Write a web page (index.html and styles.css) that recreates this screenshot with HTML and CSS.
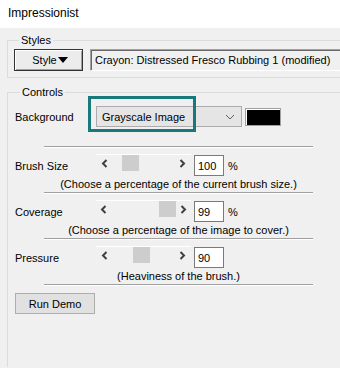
FILE: index.html
```html
<!DOCTYPE html>
<html lang="en">
<head>
    <meta charset="UTF-8">
    <meta name="viewport" content="width=device-width, initial-scale=1.0">
    <title>Impressionist</title>
    <link rel="stylesheet" href="styles.css">
</head>
<body>

    <div class="titlebar">Impressionist</div>

    <div class="dialog">

        <!-- Styles group -->
        <div class="group group-styles">
            <div class="group-title">Styles</div>
            <div class="styles-row">
                <button class="btn btn-default">Style<span class="caret"></span></button>
                <div class="style-name">Crayon: Distressed Fresco Rubbing 1 (modified)</div>
            </div>
        </div>

        <!-- Controls group -->
        <div class="group group-controls">
            <div class="group-title">Controls</div>

            <div class="row bg-row">
                <span class="row-label">Background</span>
                <div class="select-wrap">
                    <div class="select">
                        <span>Grayscale Image</span>
                        <svg class="chevron" width="10" height="6" viewBox="0 0 10 6">
                            <path d="M1 1 L5 5 L9 1" fill="none" stroke="#606060" stroke-width="1"/>
                        </svg>
                    </div>
                    <div class="highlight"></div>
                </div>
                <div class="swatch"></div>
            </div>

            <div class="sep"></div>
            <div class="row">
                <span class="row-label">Brush Size</span>
                <div class="slider">
                    <span class="arrow"><svg width="7" height="9" viewBox="0 0 7 9"><path d="M5.5 1 L2 4.5 L5.5 8" fill="none" stroke="#404040" stroke-width="2"/></svg></span>
                    <div class="track"><div class="thumb" style="margin-left: 9px"></div></div>
                    <span class="arrow"><svg width="7" height="9" viewBox="0 0 7 9"><path d="M1.5 1 L5 4.5 L1.5 8" fill="none" stroke="#404040" stroke-width="2"/></svg></span>
                </div>
                <input class="num" type="text" value="100">
                <span class="unit">%</span>
            </div>
            <div class="hint">(Choose a percentage of the current brush size.)</div>

            <div class="sep"></div>
            <div class="row">
                <span class="row-label">Coverage</span>
                <div class="slider">
                    <span class="arrow"><svg width="7" height="9" viewBox="0 0 7 9"><path d="M5.5 1 L2 4.5 L5.5 8" fill="none" stroke="#404040" stroke-width="2"/></svg></span>
                    <div class="track"><div class="thumb" style="margin-left: 47px"></div></div>
                    <span class="arrow"><svg width="7" height="9" viewBox="0 0 7 9"><path d="M1.5 1 L5 4.5 L1.5 8" fill="none" stroke="#404040" stroke-width="2"/></svg></span>
                </div>
                <input class="num" type="text" value="99">
                <span class="unit">%</span>
            </div>
            <div class="hint">(Choose a percentage of the image to cover.)</div>

            <div class="sep"></div>
            <div class="row">
                <span class="row-label">Pressure</span>
                <div class="slider">
                    <span class="arrow"><svg width="7" height="9" viewBox="0 0 7 9"><path d="M5.5 1 L2 4.5 L5.5 8" fill="none" stroke="#404040" stroke-width="2"/></svg></span>
                    <div class="track"><div class="thumb" style="margin-left: 20px"></div></div>
                    <span class="arrow"><svg width="7" height="9" viewBox="0 0 7 9"><path d="M1.5 1 L5 4.5 L1.5 8" fill="none" stroke="#404040" stroke-width="2"/></svg></span>
                </div>
                <input class="num" type="text" value="90">
            </div>
            <div class="hint">(Heaviness of the brush.)</div>

            <div class="sep"></div>
            <button class="btn btn-demo">Run Demo</button>
        </div>
    </div>

</body>
</html>
```

FILE: styles.css
```css
/* Global */
html, body {
    margin: 0;
    padding: 0;
    width: 340px;
    height: 368px;
    overflow: hidden;
    background: #f0f0f0;
    font-family: "Liberation Sans", Arial, sans-serif;
    font-size: 11px;
    color: #000;
}

/* Window title */
.titlebar {
    height: 28px;
    line-height: 26px;
    padding-left: 8px;
    background: #fff;
    font-size: 12px;
}

.dialog {
    padding-left: 7px;
}

/* Group boxes */
.group {
    border: 1px solid #dcdcdc;
    border-right: none;
}

.group-title {
    width: fit-content;
    height: 13px;
    line-height: 13px;
    margin: -7px 0 0 5px;
    padding: 0 2px;
    background: #f0f0f0;
}

.group-styles {
    margin-top: 12px;
    padding: 0 0 6px 6px;
}

.group-controls {
    margin-top: 14px;
    padding: 0 0 0 7px;
    height: 274px;
    border-bottom: none;
}

/* Styles row */
.styles-row {
    display: flex;
    margin-top: 2px;
}

.btn {
    font-family: inherit;
    font-size: 11px;
    color: #000;
    padding: 0;
    margin: 0;
}

.btn-default {
    flex: none;
    width: 69px;
    height: 22px;
    background: #ececec;
    border: 1px solid #333;
    box-shadow: inset 1px 1px #fff, inset -1px -1px #a0a0a0;
    display: flex;
    align-items: center;
    justify-content: center;
    padding-left: 3px;
}

.caret {
    display: inline-block;
    width: 0;
    height: 0;
    margin-left: 1px;
    border-left: 5px solid transparent;
    border-right: 5px solid transparent;
    border-top: 6px solid #000;
}

.style-name {
    flex: none;
    width: 260px;
    height: 22px;
    line-height: 20px;
    margin-left: 7px;
    padding-left: 4px;
    box-sizing: border-box;
    border-top: 1px solid #a0a0a0;
    border-left: 1px solid #a0a0a0;
    border-bottom: 1px solid #fff;
    box-shadow: inset 1px 1px #696969;
    white-space: nowrap;
}

/* Control rows */
.row {
    display: flex;
    align-items: center;
    height: 21px;
    margin-top: 7px;
}

.row-label {
    width: 81px;
    flex: none;
}

.select-wrap {
    position: relative;
}

.select {
    width: 146px;
    height: 21px;
    box-sizing: border-box;
    border: 1px solid #acacac;
    background: #e5e5e5;
    display: flex;
    align-items: center;
    justify-content: space-between;
    padding: 0 6px 0 5px;
}

.chevron {
    margin-top: 1px;
}

/* teal outline drawn over the dropdown */
.highlight {
    position: absolute;
    left: -8px;
    top: -10px;
    width: 108px;
    height: 36px;
    box-sizing: border-box;
    border: 3px solid #17797a;
}

.swatch {
    width: 36px;
    height: 18px;
    box-sizing: border-box;
    margin-left: 3px;
    background: #000;
    border: 1px solid #a0a0a0;
    box-shadow: inset 1px 1px #fff;
}

.sep {
    margin: 19px 0 0 29px;
    width: 269px;
    border-top: 1px solid #a0a0a0;
    border-bottom: 1px solid #fff;
}

.hint + .sep {
    margin-top: 1px;
}

/* Scroll slider */
.slider {
    display: flex;
    width: 95px;
    height: 17px;
    align-self: flex-start;
    margin-top: -1px;
    border-top: 1px solid #fff;
    box-sizing: border-box;
}

.arrow {
    width: 17px;
    display: flex;
    align-items: center;
    justify-content: center;
}

.track {
    flex: 1;
}

.thumb {
    width: 17px;
    height: 16px;
    background: #cdcdcd;
}

.num {
    width: 30px;
    height: 21px;
    box-sizing: border-box;
    margin: 0 0 0 3px;
    padding: 0 0 0 3px;
    border: 1px solid #7a7a7a;
    background: #fff;
    font-family: inherit;
    font-size: 11px;
    color: #000;
    outline: none;
}

.unit {
    margin-left: 4px;
}

.hint {
    margin: 1px 0 0 29px;
    width: 269px;
    height: 14px;
    line-height: 14px;
    text-align: center;
}

.btn-demo {
    display: block;
    width: 80px;
    height: 21px;
    margin-top: 7px;
    background: #e1e1e1;
    border: 1px solid #adadad;
}
```
